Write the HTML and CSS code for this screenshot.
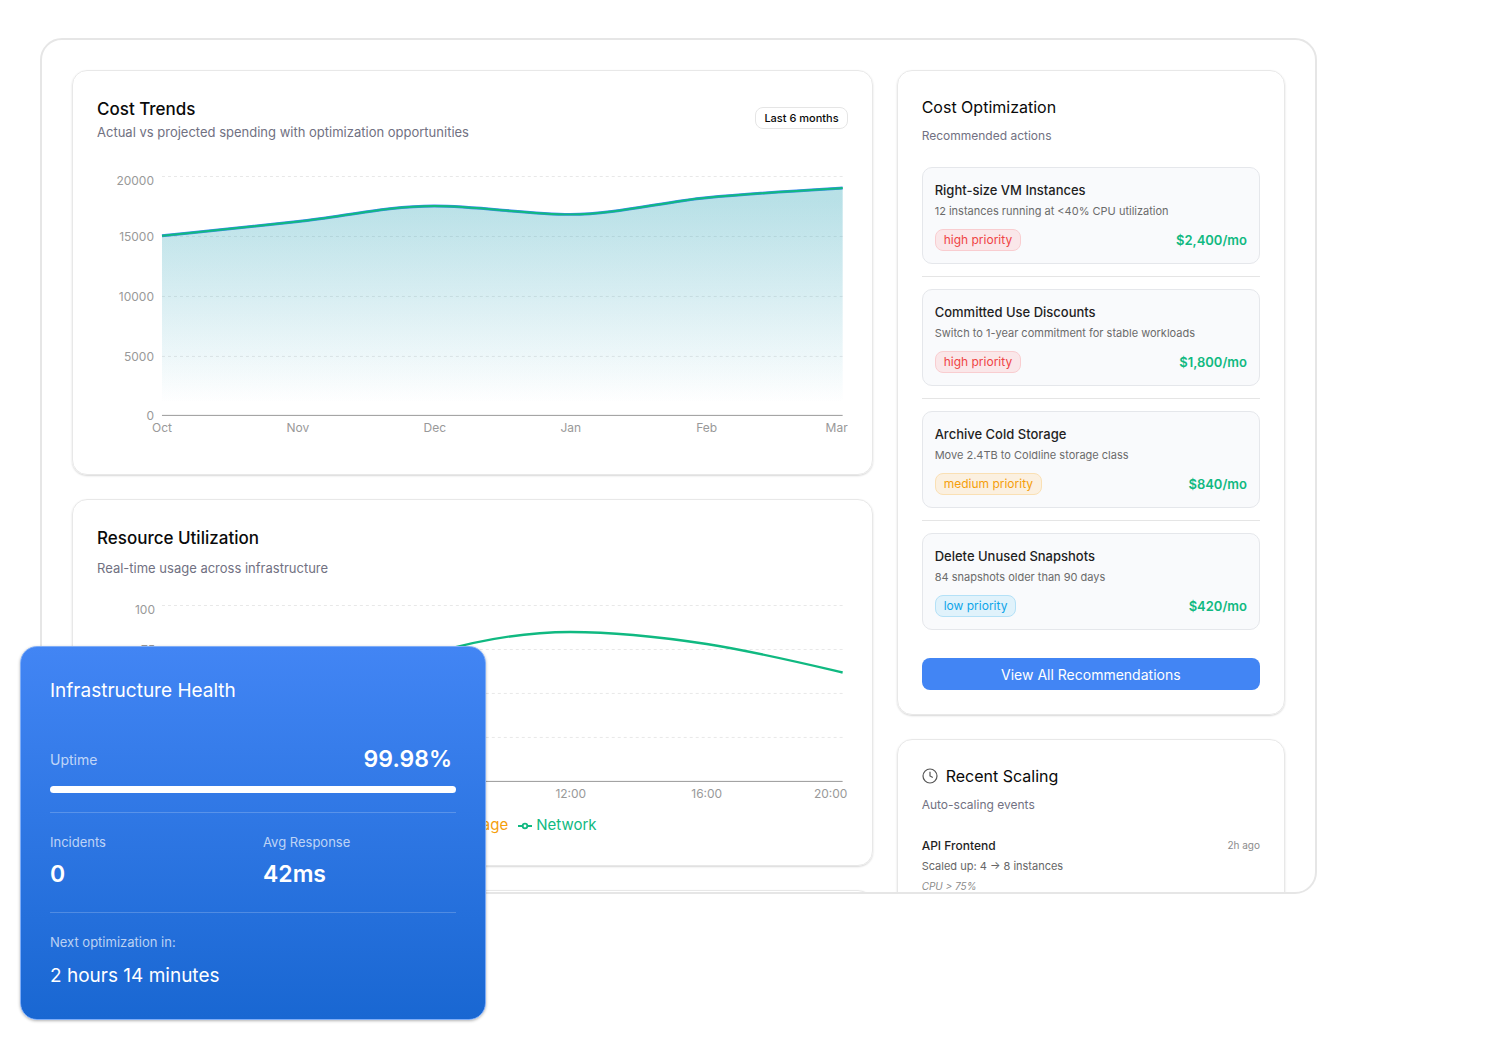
FILE: index.html
```html
<!DOCTYPE html>
<html lang="en">
<head>
    <meta charset="UTF-8">
    <meta name="viewport" content="width=device-width, initial-scale=1.0">
    <title>Cloud Cost Dashboard</title>
    <link rel="stylesheet" href="styles.css">
</head>
<body>

    <div class="page">
        <main class="frame">
            <div class="column column-wide">
                <section class="card">
                    <div class="card-header-row">
                        <div>
                            <h2 class="chart-title">Cost Trends</h2>
                            <p class="subtitle">Actual vs projected spending with optimization opportunities</p>
                        </div>
                        <span class="badge">Last 6 months</span>
                    </div>
                    <svg class="chart" viewBox="0 0 751 286" role="img" aria-label="Cost trends">
                        <defs>
                            <linearGradient id="fillActual" x1="0" y1="0" x2="0" y2="1">
                                <stop offset="5%" stop-color="#4285f4" stop-opacity="0.18"/>
                                <stop offset="95%" stop-color="#4285f4" stop-opacity="0"/>
                            </linearGradient>
                            <linearGradient id="fillProjected" x1="0" y1="0" x2="0" y2="1">
                                <stop offset="5%" stop-color="#10b981" stop-opacity="0.18"/>
                                <stop offset="95%" stop-color="#10b981" stop-opacity="0"/>
                            </linearGradient>
                        </defs>
                        <path class="grid-line" d="M65 12.5H746M65 72.5H746M65 132.5H746M65 192.5H746"/>
                        <path fill="url(#fillActual)" d="M65 71.9C110.4 67.2 155.8 62.6 201.2 57.6C246.6 52.6 292 42 337.4 42C382.8 42 428.2 50.4 473.6 50.4C519 50.4 564.4 38.1 609.8 33.7C655.2 29.3 700.6 26.7 746 24V251H65Z"/>
                        <path class="line line-blue" d="M65 71.9C110.4 67.2 155.8 62.6 201.2 57.6C246.6 52.6 292 42 337.4 42C382.8 42 428.2 50.4 473.6 50.4C519 50.4 564.4 38.1 609.8 33.7C655.2 29.3 700.6 26.7 746 24"/>
                        <path fill="url(#fillProjected)" d="M65 71.9C110.4 67.2 155.8 62.6 201.2 57.6C246.6 52.6 292 42 337.4 42C382.8 42 428.2 50.4 473.6 50.4C519 50.4 564.4 38.1 609.8 33.7C655.2 29.3 700.6 26.7 746 24V251H65Z"/>
                        <path class="line line-green" d="M65 71.9C110.4 67.2 155.8 62.6 201.2 57.6C246.6 52.6 292 42 337.4 42C382.8 42 428.2 50.4 473.6 50.4C519 50.4 564.4 38.1 609.8 33.7C655.2 29.3 700.6 26.7 746 24"/>
                        <path class="axis-line" d="M65 251.5H746"/>
                        <g class="tick tick-y">
                            <text x="57" y="21">20000</text>
                            <text x="57" y="77">15000</text>
                            <text x="57" y="137">10000</text>
                            <text x="57" y="197">5000</text>
                            <text x="57" y="256">0</text>
                        </g>
                        <g class="tick tick-x">
                            <text x="65" y="268">Oct</text>
                            <text x="201" y="268">Nov</text>
                            <text x="338" y="268">Dec</text>
                            <text x="474" y="268">Jan</text>
                            <text x="610" y="268">Feb</text>
                            <text x="740" y="268">Mar</text>
                        </g>
                    </svg>
                </section>

                <section class="card">
                    <h2 class="chart-title">Resource Utilization</h2>
                    <p class="subtitle subtitle-spaced">Real-time usage across infrastructure</p>
                    <svg class="chart" viewBox="0 0 751 214" role="img" aria-label="Resource utilization">
                        <path class="grid-line" d="M65 12.5H746M65 56.5H746M65 100.5H746M65 144.5H746"/>
                        <path class="axis-line" d="M65 188.5H746"/>
                        <path class="line line-green line-usage" d="M65 130C110 124 156 112 201 98C246 84 292 73 337 60C382 47 428 39 473.6 39C519 39 564 44 610 51C655 58 701 69 746 79.5"/>
                        <g class="tick tick-y">
                            <text x="58" y="21">100</text>
                            <text x="58" y="61">75</text>
                            <text x="58" y="105">50</text>
                            <text x="58" y="149">25</text>
                            <text x="58" y="193">0</text>
                        </g>
                        <g class="tick tick-x">
                            <text x="65" y="205">00:00</text>
                            <text x="201" y="205">04:00</text>
                            <text x="338" y="205">08:00</text>
                            <text x="474" y="205">12:00</text>
                            <text x="610" y="205">16:00</text>
                            <text x="734" y="205">20:00</text>
                        </g>
                    </svg>
                    <ul class="legend">
                        <li class="legend-item blue">
                            <svg class="legend-icon" viewBox="0 0 14 14"><path d="M0 8H4.500M9.500 8H14"/><circle cx="7" cy="8" r="2.300"/></svg>
                            Memory
                        </li>
                        <li class="legend-item orange">
                            <svg class="legend-icon" viewBox="0 0 14 14"><path d="M0 8H4.500M9.500 8H14"/><circle cx="7" cy="8" r="2.300"/></svg>
                            Storage
                        </li>
                        <li class="legend-item green">
                            <svg class="legend-icon" viewBox="0 0 14 14"><path d="M0 8H4.500M9.500 8H14"/><circle cx="7" cy="8" r="2.300"/></svg>
                            Network
                        </li>
                    </ul>
                </section>

                <section class="card card-next"></section>
            </div>

            <div class="column">
                <section class="card">
                    <h2 class="title">Cost Optimization</h2>
                    <p class="subtitle subtitle-small">Recommended actions</p>
                    <ul class="actions">
                        <li class="action-row">
                            <div class="action">
                                <h3 class="item-title">Right-size VM Instances</h3>
                                <p class="action-text">12 instances running at &lt;40% CPU utilization</p>
                                <div class="action-footer">
                                    <span class="priority high">high priority</span>
                                    <span class="saving">$2,400/mo</span>
                                </div>
                            </div>
                        </li>
                        <li class="action-row">
                            <div class="action">
                                <h3 class="item-title">Committed Use Discounts</h3>
                                <p class="action-text">Switch to 1-year commitment for stable workloads</p>
                                <div class="action-footer">
                                    <span class="priority high">high priority</span>
                                    <span class="saving">$1,800/mo</span>
                                </div>
                            </div>
                        </li>
                        <li class="action-row">
                            <div class="action">
                                <h3 class="item-title">Archive Cold Storage</h3>
                                <p class="action-text">Move 2.4TB to Coldline storage class</p>
                                <div class="action-footer">
                                    <span class="priority medium">medium priority</span>
                                    <span class="saving">$840/mo</span>
                                </div>
                            </div>
                        </li>
                        <li class="action-row">
                            <div class="action">
                                <h3 class="item-title">Delete Unused Snapshots</h3>
                                <p class="action-text">84 snapshots older than 90 days</p>
                                <div class="action-footer">
                                    <span class="priority low">low priority</span>
                                    <span class="saving">$420/mo</span>
                                </div>
                            </div>
                        </li>
                    </ul>
                    <button class="view-all" type="button">View All Recommendations</button>
                </section>

                <section class="card">
                    <h2 class="title title-icon">
                        <svg class="clock" viewBox="0 0 16 16"><circle cx="8" cy="8" r="7"/><path d="M8 3.800V8L10.800 9.500"/></svg>
                        Recent Scaling
                    </h2>
                    <p class="subtitle subtitle-small">Auto-scaling events</p>
                    <div class="event">
                        <div class="event-header">
                            <h3 class="event-title">API Frontend</h3>
                            <span class="event-time">2h ago</span>
                        </div>
                        <p class="event-text">Scaled up: 4 → 8 instances</p>
                        <p class="event-reason">CPU &gt; 75%</p>
                    </div>
                </section>
            </div>
        </main>

        <aside class="health">
            <h2 class="health-title">Infrastructure Health</h2>
            <div class="uptime">
                <label for="uptime">Uptime</label>
                <span class="health-value">99.98%</span>
            </div>
            <progress class="uptime-bar" id="uptime" value="100" max="100"></progress>
            <div class="health-stats">
                <div>
                    <p class="health-label">Incidents</p>
                    <p class="health-value">0</p>
                </div>
                <div>
                    <p class="health-label">Avg Response</p>
                    <p class="health-value">42ms</p>
                </div>
            </div>
            <p class="health-label">Next optimization in:</p>
            <p class="health-next">2 hours 14 minutes</p>
        </aside>
    </div>

</body>
</html>
```
FILE: styles.css
```css
/* General styling */
* {
    box-sizing: border-box;
}

body {
    margin: 0;
    background: #fff;
    color: #0a0a0a;
    font-family: Inter, "Liberation Sans", Arial, sans-serif;
}

h2, h3, p, ul {
    margin: 0;
    padding: 0;
    font-weight: 400;
}

ul {
    list-style: none;
}

.page {
    position: relative;
    height: 100vh;
    padding: 38px 183px 166px 40px;
    overflow: hidden;
}

/* Dashboard frame, cuts off the cards that run past it */
.frame {
    display: grid;
    grid-template-columns: repeat(3, 1fr);
    align-items: start;
    gap: 24px;
    height: 100%;
    padding: 30px;
    border: 2px solid #e6e6e6;
    border-radius: 22px;
    overflow: hidden;
}

.column {
    display: flex;
    flex-direction: column;
    gap: 24px;
    min-width: 0;
}

.column-wide {
    grid-column: span 2;
}

.card {
    padding: 24px;
    border: 1px solid #e8e8e8;
    border-radius: 15px;
    box-shadow: 0 1px 2px rgba(0, 0, 0, 0.16);
}

.card-next {
    height: 120px;
}

.card-header-row {
    display: flex;
    justify-content: space-between;
    align-items: center;
    margin-bottom: 23px;
}

.chart-title {
    font-size: 17px;
    line-height: 28px;
    font-weight: 500;
}

.title {
    font-size: 16px;
    line-height: 24px;
}

.title-icon {
    display: flex;
    align-items: center;
    gap: 8px;
}

.subtitle {
    color: #717182;
    font-size: 13px;
    line-height: 18px;
}

.subtitle-spaced {
    margin: 7px 0 16px;
}

.subtitle-small {
    margin: 8px 0 22px;
    font-size: 12px;
}

.badge {
    padding: 2px 8px;
    border: 1px solid #e5e5e5;
    border-radius: 8px;
    font-size: 11px;
    line-height: 16px;
    font-weight: 500;
}

/* Charts */
.chart {
    display: block;
    width: 100%;
}

.grid-line {
    fill: none;
    stroke: #e8e8e8;
    stroke-dasharray: 3 3;
}

.axis-line {
    stroke: #999;
}

.line {
    fill: none;
    stroke-width: 2;
}

.line-blue {
    stroke: #4285f4;
    stroke-width: 3;
}

.line-green {
    stroke: #10b981;
}

.line-usage {
    stroke-width: 2.4;
}

.tick {
    fill: #999;
    font-size: 12px;
}

.tick-y {
    text-anchor: end;
}

.tick-x {
    text-anchor: middle;
}

.legend {
    display: flex;
    justify-content: center;
    gap: 10px;
    padding: 6px 0 4px;
}

.legend-item {
    display: flex;
    align-items: center;
    gap: 4px;
    font-size: 15px;
    line-height: 24px;
}

.legend-icon {
    width: 14px;
    height: 14px;
    fill: none;
    stroke: currentColor;
    stroke-width: 1.8;
}

.blue {
    color: #4285f4;
}

.orange {
    color: #f59e0b;
}

.green {
    color: #10b981;
}

/* Recommended actions */
.action-row + .action-row {
    margin-top: 12px;
    padding-top: 12px;
    border-top: 1px solid #e5e5e5;
}

.action {
    padding: 12px;
    border: 1px solid #e5e7eb;
    border-radius: 10px;
    background: #f9fafc;
}

.item-title {
    color: #1f1f1f;
    font-size: 13px;
    line-height: 20px;
    font-weight: 500;
}

.action-text {
    color: #6b6b6b;
    font-size: 11px;
    line-height: 22px;
}

.action-footer {
    display: flex;
    justify-content: space-between;
    align-items: center;
    margin-top: 7px;
}

.priority {
    padding: 2px 8px;
    border: 1px solid;
    border-radius: 8px;
    font-size: 12px;
    line-height: 16px;
}

.high {
    border-color: #f9cdd0;
    background: #fae7e9;
    color: #ef4444;
}

.medium {
    border-color: #fae0b4;
    background: #fbf0e0;
    color: #f59e0b;
}

.low {
    border-color: #b4e1f7;
    background: #e0f2fb;
    color: #0ea5e9;
}

.saving {
    color: #10b981;
    font-size: 13px;
    line-height: 20px;
    font-weight: 600;
}

.view-all {
    width: 100%;
    height: 32px;
    margin-top: 28px;
    border: none;
    border-radius: 8px;
    background: #4285f4;
    color: #fff;
    font-family: inherit;
    font-size: 14px;
    cursor: pointer;
}

/* Scaling events */
.clock {
    width: 16px;
    height: 16px;
    fill: none;
    stroke: #555;
    stroke-width: 1.2;
}

.event-header {
    display: flex;
    justify-content: space-between;
}

.event-title {
    color: #1f1f1f;
    font-size: 12px;
    line-height: 20px;
    font-weight: 500;
}

.event-time {
    color: #8c8c8c;
    font-size: 10px;
    line-height: 18px;
}

.event-text {
    color: #666;
    font-size: 11px;
    line-height: 20px;
}

.event-reason {
    color: #8c8c8c;
    font-size: 10px;
    line-height: 20px;
    font-style: italic;
}

/* Health card floating over the frame */
.health {
    position: absolute;
    bottom: 40px;
    left: 20px;
    width: 466px;
    padding: 28px 29px 25px;
    border: 1px solid #7fadf7;
    border-radius: 17px;
    background: linear-gradient(to bottom, #4285f4, #1967d2);
    box-shadow: 0 1px 3px rgba(0, 0, 0, 0.3);
    color: #fff;
}

.health-title {
    margin-bottom: 36px;
    font-size: 19px;
    line-height: 32px;
}

.uptime {
    display: flex;
    justify-content: space-between;
    align-items: center;
    padding-right: 4px;
    color: rgba(255, 255, 255, 0.7);
    font-size: 14px;
}

.health-value {
    color: #fff;
    font-size: 23px;
    line-height: 32px;
    font-weight: 600;
}

.uptime-bar {
    display: block;
    width: 100%;
    height: 7px;
    margin: 11px 0 19px;
    border: none;
    border-radius: 4px;
    background: rgba(255, 255, 255, 0.2);
    overflow: hidden;
    appearance: none;
}

.uptime-bar::-webkit-progress-bar {
    background: transparent;
}

.uptime-bar::-webkit-progress-value {
    background: #fff;
}

.health-stats {
    display: grid;
    grid-template-columns: 1fr 1fr;
    gap: 20px;
    margin-bottom: 19px;
    padding: 19px 0 22px;
    border-top: 1px solid rgba(255, 255, 255, 0.2);
    border-bottom: 1px solid rgba(255, 255, 255, 0.2);
}

.health-label {
    margin-bottom: 6px;
    color: rgba(255, 255, 255, 0.7);
    font-size: 13px;
    line-height: 20px;
}

.health-next {
    font-size: 19px;
    line-height: 36px;
}
```
